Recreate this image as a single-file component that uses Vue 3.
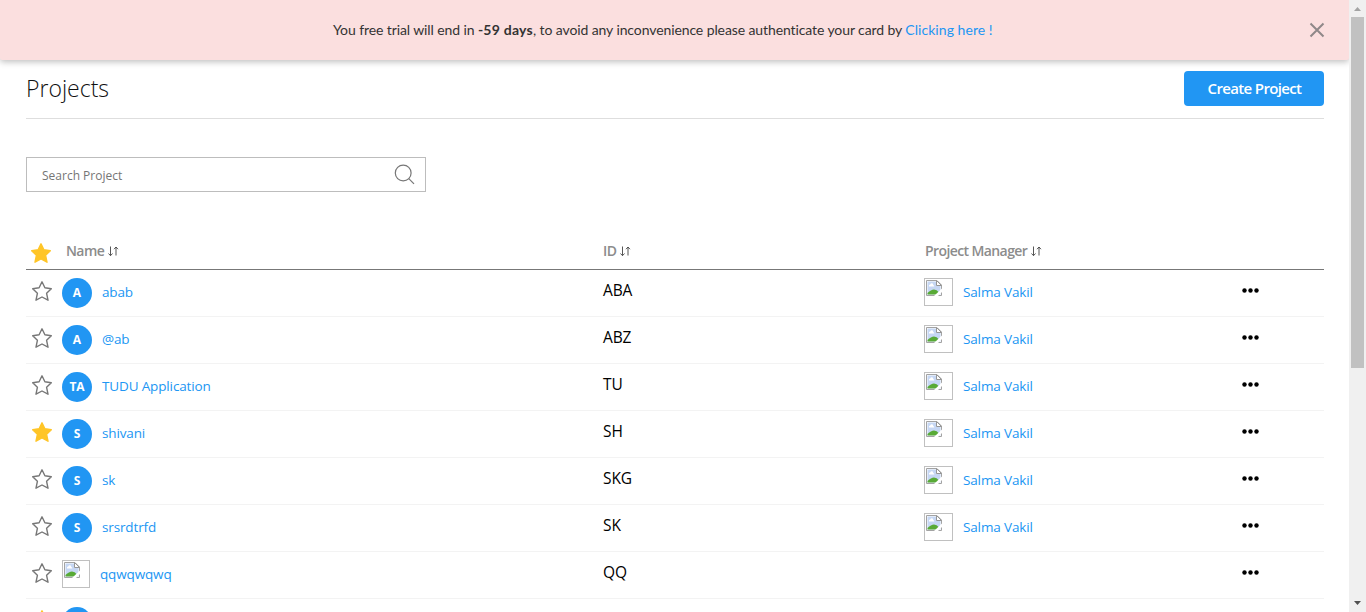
<script setup>
const manager = 'Salma Vakil'
const rows = [
  { avatar: true, initials: 'A', name: 'abab', id: 'ABA', manager, k: 'n1' },
  { avatar: true, initials: 'A', name: '@ab', id: 'ABZ', manager, k: 'n2' },
  { avatar: true, initials: 'TA', name: 'TUDU Application', id: 'TU', manager, k: 'n3' },
  { avatar: true, initials: 'S', name: 'shivani', id: 'SH', manager, starred: true, k: 'n4' },
  { avatar: true, initials: 'S', name: 'sk', id: 'SKG', manager, k: 'n5' },
  { avatar: true, initials: 'S', name: 'srsrdtrfd', id: 'SK', manager, k: 'n6' },
  { name: 'qqwqwqwq', id: 'QQ', k: 'n7' },
  { avatar: true, starred: true, k: 'n8' },
]
const columns = [
  { label: 'Name', cls: 'h-name' },
  { label: 'ID', cls: 'h-id' },
  { label: 'Project Manager', cls: 'h-pm' },
]
const starPath = 'M10 0.800 L12.900 6.800 L19.300 7.700 L14.600 12.300 L16 19.200 L10 16 L4 19.200 L5.400 12.300 L0.700 7.700 L7.100 6.800 Z'
</script>

<template>
  <div class="screen">
    <svg class="defs" width="0" height="0">
      <symbol id="broken" viewBox="0 0 16 16">
        <path d="M0.500 0.500H11L15.500 5V15.500H0.500Z" fill="#fff" stroke="#a3a3a3" />
        <path d="M1.500 1.500H10.500V5.500H14.500V14.500H1.500Z" fill="#c6d7f4" />
        <path d="M3 6.500V5.300Q3.200 4.500 4.200 4.500Q4.800 2.800 6.200 3.300Q7.500 4 7.200 5Q8.300 5.200 8.300 6.500Z" fill="#fff" />
        <path d="M1.500 14.500V13Q5 9.500 8 9.500Q11 9.500 12.500 12V14.500Z" fill="#58aa36" />
        <path d="M8 16L16 8.500V12L12 16Z" fill="#fff" />
        <path d="M10.500 0.500V5.500H15.500Z" fill="#fff" stroke="#969696" />
      </symbol>
    </svg>
    <div class="page">
      <div class="banner">
        <p class="notice">You free trial will end in <b>-59 days</b>, to avoid any inconvenience please authenticate your card by <a>Clicking here !</a></p>
        <svg class="close" width="16" height="16" viewBox="0 0 16 16"><path d="M1.500 1.500L14.500 14.500M14.500 1.500L1.500 14.500" stroke="#8f8889" stroke-width="2" /></svg>
      </div>
      <main>
        <header class="title-bar">
          <h1>Projects</h1>
          <button class="create"><span>Create Project</span></button>
        </header>
        <div class="search">
          <span>Search Project</span>
          <svg width="21" height="21" viewBox="0 0 21 21" fill="none" stroke="#777" stroke-width="1.200"><circle cx="9.200" cy="9" r="7.900" /><path d="M14.800 14.600L20 19.800" /></svg>
        </div>
        <div class="table">
          <div class="head grid">
            <svg class="star on" width="20" height="20" viewBox="0 0 20 20"><path :d="starPath" /></svg>
            <div v-for="c in columns" :key="c.label" class="th" :class="c.cls">
              <span>{{ c.label }}</span>
              <svg width="11" height="11" viewBox="0 0 11 11" fill="none" stroke="#444" stroke-width=".9"><path d="M2.500 0.500V9.500M0.500 7.500L2.500 9.700L4.500 7.500M8 9.500V1M6 3.200L8 1L10 3.200" /></svg>
            </div>
          </div>
          <div v-for="r in rows" :key="r.k" class="row grid">
            <svg class="star" :class="{ on: r.starred }" width="20" height="20" viewBox="0 0 20 20"><path :d="starPath" /></svg>
            <div class="project">
              <span v-if="r.avatar" class="avatar">{{ r.initials }}</span>
              <span v-else class="missing project-missing"><svg width="16" height="16"><use href="#broken" /></svg></span>
              <a>{{ r.name }}</a>
            </div>
            <div class="pid">{{ r.id }}</div>
            <div class="manager">
              <template v-if="r.manager">
                <span class="missing"><svg width="16" height="16"><use href="#broken" /></svg></span>
                <a>{{ r.manager }}</a>
              </template>
            </div>
            <svg v-if="r.id" class="more" width="18" height="5" viewBox="0 0 18 5"><circle cx="2.500" cy="2.500" r="2.200" /><circle cx="8.500" cy="2.500" r="2.200" /><circle cx="14.500" cy="2.500" r="2.200" /></svg>
          </div>
        </div>
      </main>
    </div>
    <aside class="scrollbar">
      <svg width="17" height="17" viewBox="0 0 17 17"><path d="M5 11L8.500 7L12 11Z" fill="#a3a3a3" /></svg>
      <div class="thumb"></div>
      <svg class="down" width="17" height="17" viewBox="0 0 17 17"><path d="M5 6L8.500 10L12 6Z" fill="#505050" /></svg>
    </aside>
  </div>
</template>

<style>
body { margin: 0; overflow: hidden; }
</style>

<style scoped>
* { box-sizing: border-box; }
.screen { display: flex; width: 1366px; height: 612px; overflow: hidden; background: #fff; font-family: "Open Sans", "Noto Sans", sans-serif; }
.defs { position: absolute; }
.page { width: 1349px; height: 612px; overflow: hidden; }
.banner { position: relative; display: flex; align-items: center; height: 60px; padding-left: 333px; background: #fbdfdf; box-shadow: 0 2px 6px rgba(0, 0, 0, .25); border-radius: 0 0 2px 2px; }
.notice { width: 975px; margin: 0; font: 14px/20px Lato, sans-serif; color: #333; white-space: nowrap; letter-spacing: -.1px; }
.notice b { letter-spacing: .25px; }
.notice a { letter-spacing: .05px; }
a { color: #2196f3; }
.close { flex: none; margin-left: 1px; }
main { padding: 0 25px 0 26px; }
.title-bar { display: flex; justify-content: space-between; align-items: flex-start; height: 59px; padding-top: 11px; border-bottom: 1px solid #dedede; }
h1 { margin: 0; font-size: 23px; line-height: 35px; font-weight: 350; color: #111; letter-spacing: 0; }
.create { width: 140px; height: 35px; padding: 0 0 0 1px; border: 0; border-radius: 4px; background: #2196f3; color: #fff; font: 600 15px/35px "Open Sans", sans-serif; letter-spacing: -.65px; white-space: nowrap; }
.search { display: flex; justify-content: space-between; align-items: center; width: 400px; height: 35px; margin-top: 38px; padding: 0 10px 0 15px; border: 1px solid #bdbdbd; font-size: 12px; line-height: 33px; color: #757575; }
.search span { padding-top: 1px; }
.table { margin-top: 42px; }
.grid { display: grid; grid-template-columns: 36px 540px 322px 318px 82px; }
.head { height: 36px; border-bottom: 1px solid #777; }
.head .star { margin: 9px 0 0 5px; }
.th { display: flex; align-items: flex-start; gap: 4px; padding-top: 7px; font-size: 14px; font-weight: 600; line-height: 20px; color: #8c8c8c; white-space: nowrap; letter-spacing: -.6px; }
.th svg { margin-top: 5px; }
.h-name { padding-left: 4px; }
.h-id { padding-left: 1px; }
.h-pm { padding-left: 1px; }
.row { height: 47px; border-bottom: 1px solid #f3f3f3; }
.star { margin: 11px 0 0 6px; fill: none; stroke: #777; stroke-width: 1.400; stroke-linejoin: round; }
.star.on { fill: #ffc527; stroke: #ffc527; }
.project, .manager { display: flex; align-items: flex-start; white-space: nowrap; font-size: 13.500px; line-height: 20px; }
.avatar { flex: none; width: 30px; height: 30px; margin: 8px 10px 0 0; border-radius: 50%; background: #2196f3; color: #fff; font-size: 12px; font-weight: 700; line-height: 30px; text-align: center; }
.missing { flex: none; width: 29px; height: 28px; margin: 8px 10px 0 0; padding: 1px; border: 1px solid #c0c0c0; line-height: 0; }
.project-missing { width: 28px; }
.project a, .manager a { margin-top: 12px; font-weight: 380; letter-spacing: -.14px; }
.pid { padding: 10px 0 0 1px; font-size: 15.500px; font-weight: 380; line-height: 20px; color: #000; letter-spacing: -.1px; }
.more { margin: 18px 0 0 0; }
.scrollbar { display: flex; flex-direction: column; width: 17px; height: 612px; background: #f0f0f0; }
.scrollbar svg { flex: none; }
.thumb { width: 13px; height: 351px; margin-left: 2px; background: #c1c1c1; }
.down { margin-top: auto; }
</style>
